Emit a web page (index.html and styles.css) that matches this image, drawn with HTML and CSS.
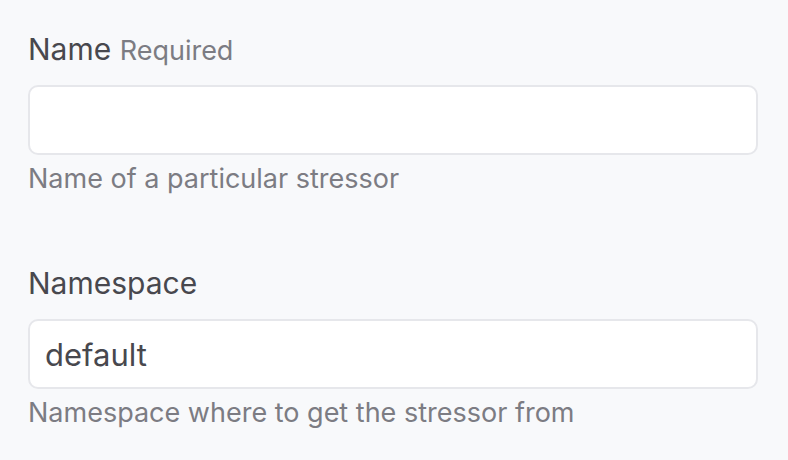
FILE: index.html
```html
<!DOCTYPE html>
<html>
<head>
<meta charset="utf-8">
<link rel="stylesheet" href="styles.css">
</head>
<body>
<form class="form">
  <div class="field">
    <label class="label" for="name">Name <span class="req">Required</span></label>
    <input class="input" id="name" type="text" value="">
    <div class="help">Name of a particular stressor</div>
  </div>
  <div class="field">
    <label class="label" for="ns">Namespace</label>
    <input class="input" id="ns" type="text" value="default">
    <div class="help">Namespace where to get the stressor from</div>
  </div>
</form>
</body>
</html>
```
FILE: styles.css
```css
html, body {
  margin: 0;
  background: #f8f9fb;
}
body {
  font-family: Inter, "Noto Sans", sans-serif;
}
.form {
  padding: 28px 30px 0 28px;
  display: flex;
  flex-direction: column;
  gap: 65px;
}
.field {
  display: flex;
  flex-direction: column;
}
.label {
  font-size: 30px;
  line-height: 42px;
  color: #48484e;
}
.req {
  font-size: 27px;
  line-height: 1;
  color: #7c7c83;
}
.input {
  box-sizing: border-box;
  margin: 15px 0 0;
  height: 70px;
  width: 100%;
  border: 2px solid #e6e7eb;
  border-radius: 10px;
  background: #fff;
  padding: 0 15px;
  font-family: inherit;
  font-size: 31px;
  color: #48484e;
  outline: none;
}
.help {
  margin-top: 6px;
  font-size: 27px;
  line-height: 36px;
  color: #7c7c83;
}
```
